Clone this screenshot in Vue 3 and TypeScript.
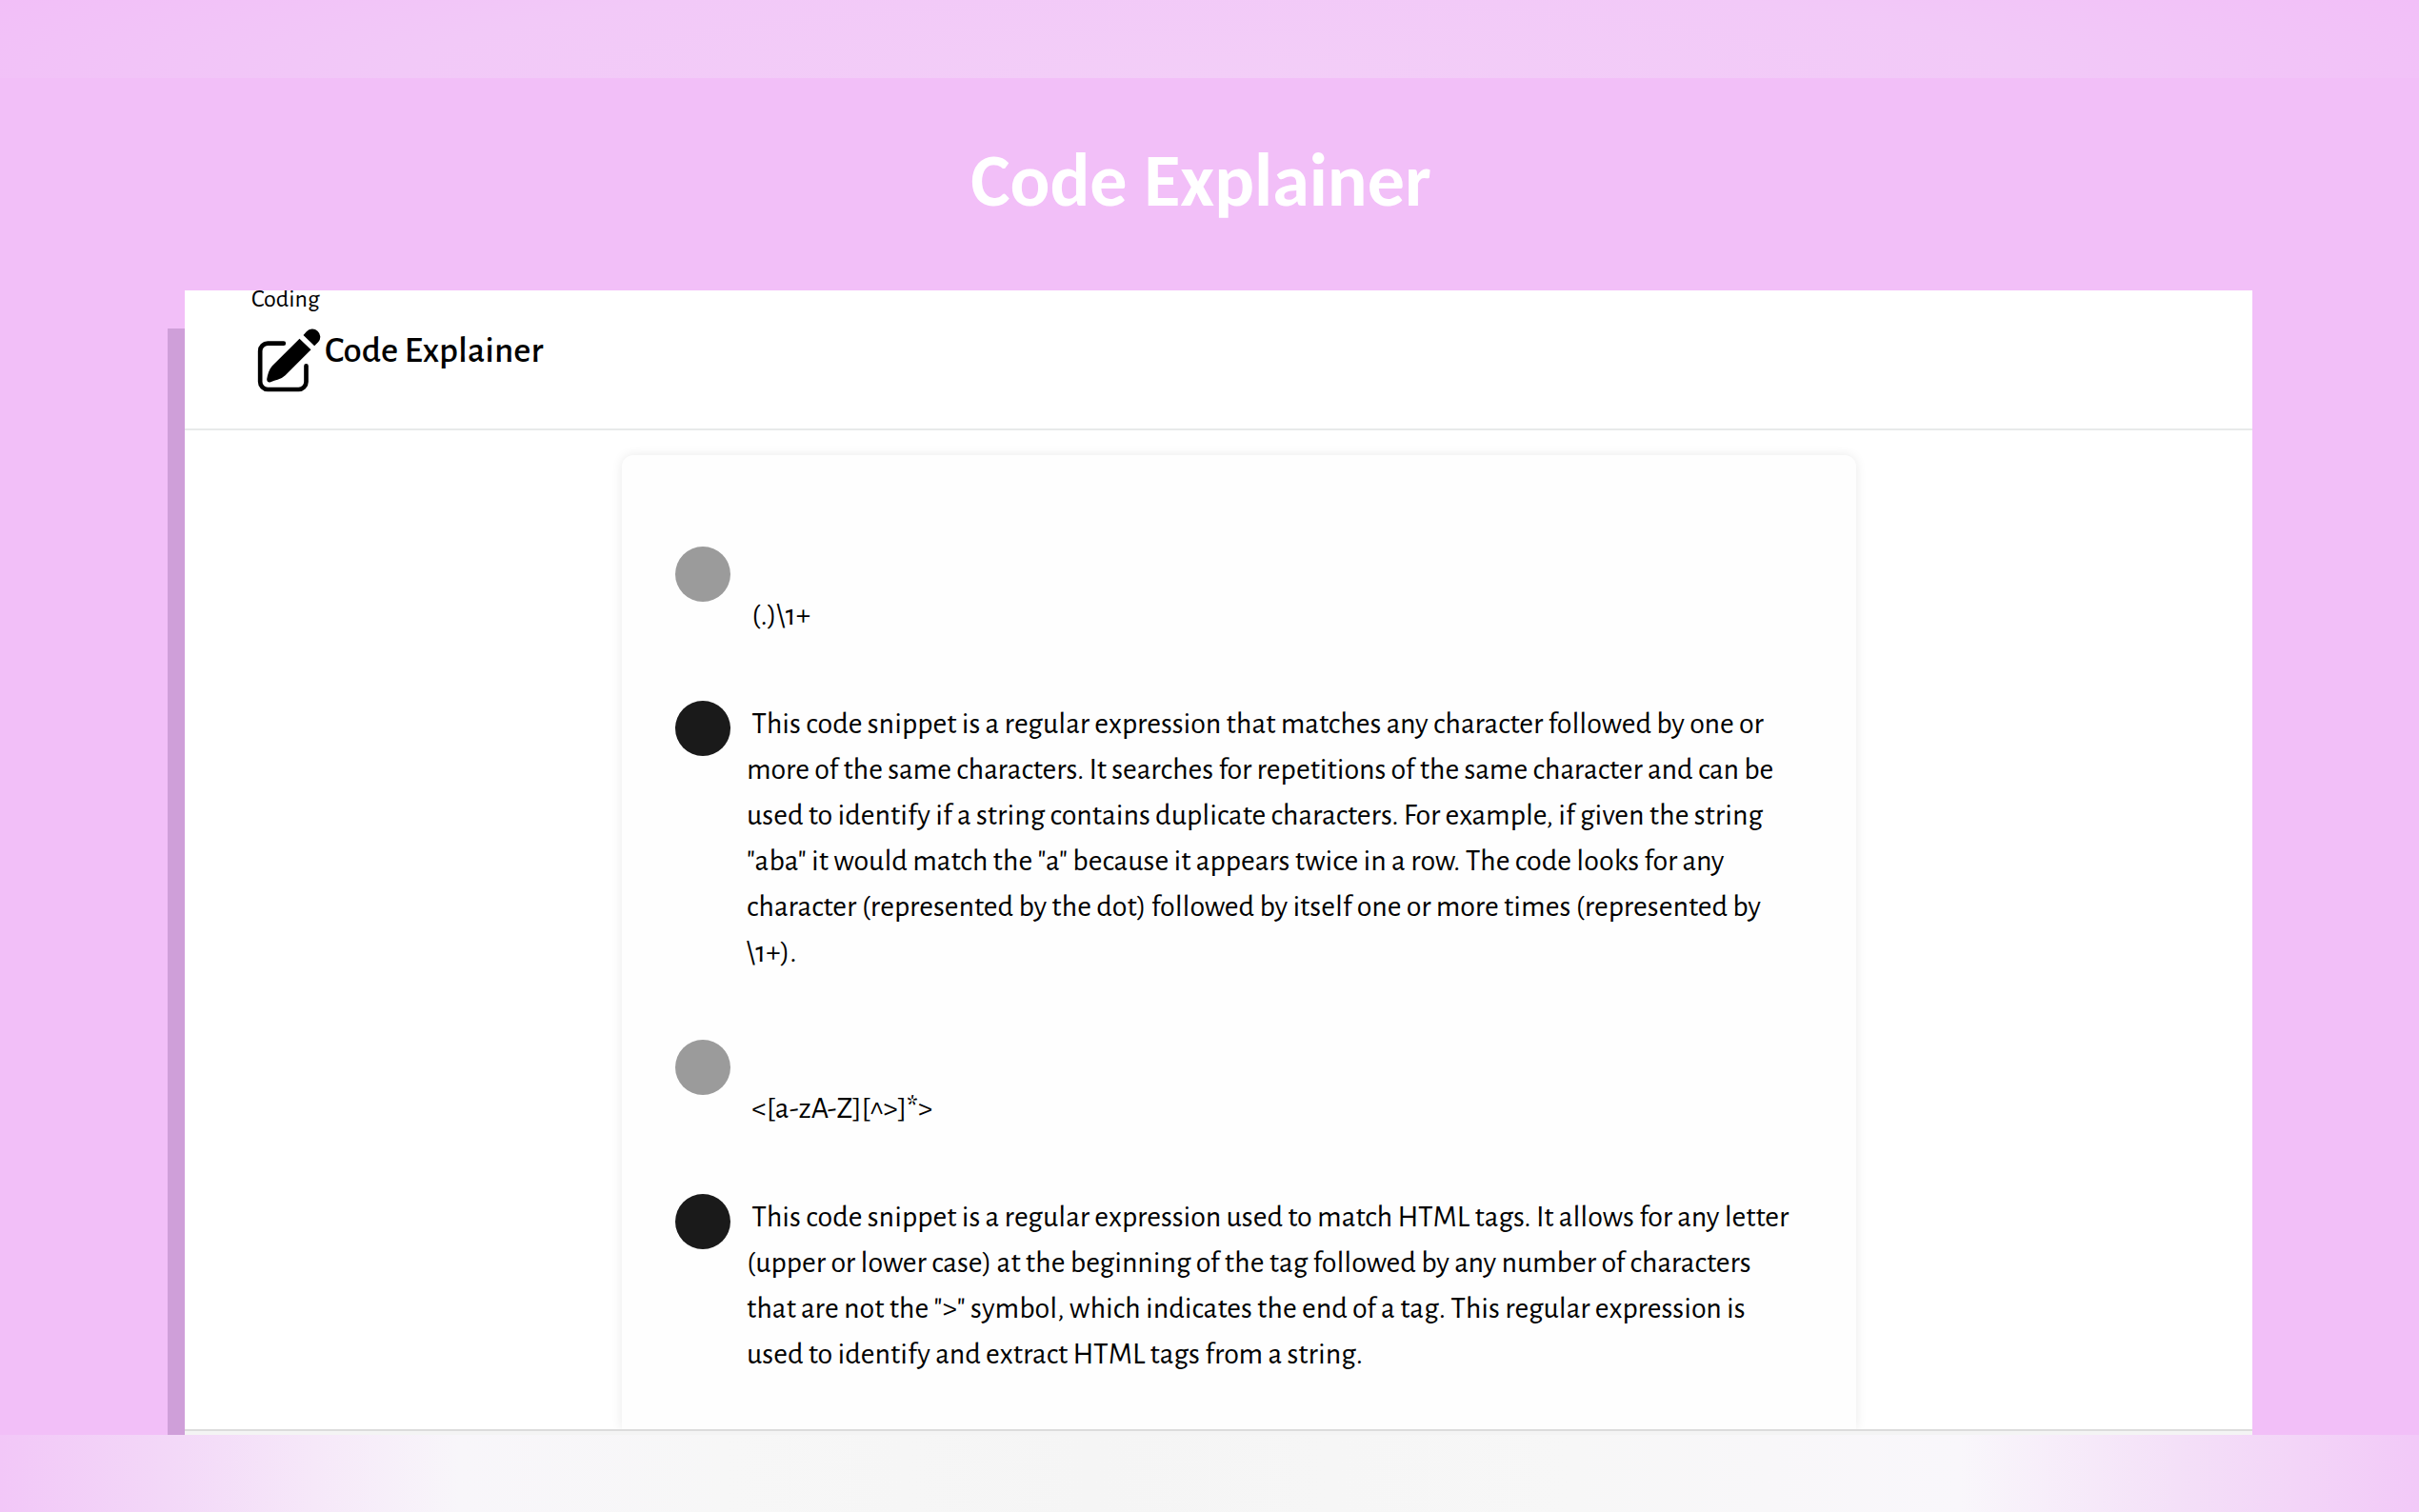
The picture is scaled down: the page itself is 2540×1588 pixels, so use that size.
<script setup lang="ts">
interface Message {
  role: 'user' | 'assistant'
  lines: string[]
}

const exchanges: Message[][] = [
  [
    { role: 'user', lines: ['', ' (.)\\1+'] },
    {
      role: 'assistant',
      lines: [
        ' This code snippet is a regular expression that matches any character followed by one or',
        'more of the same characters. It searches for repetitions of the same character and can be',
        'used to identify if a string contains duplicate characters. For example, if given the string',
        '"aba" it would match the "a" because it appears twice in a row. The code looks for any',
        'character (represented by the dot) followed by itself one or more times (represented by',
        '\\1+).'
      ]
    }
  ],
  [
    { role: 'user', lines: ['', ' <[a-zA-Z][^>]*>'] },
    {
      role: 'assistant',
      lines: [
        ' This code snippet is a regular expression used to match HTML tags. It allows for any letter',
        '(upper or lower case) at the beginning of the tag followed by any number of characters',
        'that are not the ">" symbol, which indicates the end of a tag. This regular expression is',
        'used to identify and extract HTML tags from a string.'
      ]
    }
  ]
]
</script>

<template>
  <main class="page">
    <div class="band"></div>
    <h1 class="title">Code Explainer</h1>

    <div class="stage">
      <div class="rail"></div>
      <section class="panel">
        <header class="head">
          <p class="category">Coding</p>
          <div class="tool">
            <svg class="icon" viewBox="333 193 200 201" aria-hidden="true">
              <path
                d="M416 240H366a24 24 0 0 0-24 24V361a24 24 0 0 0 24 24H463a24 24 0 0 0 24-24V311"
                fill="none"
                stroke="#000"
                stroke-width="14"
                stroke-linecap="round"
              />
              <path d="M466 225L502 260L421 341Q411 351 397 354Q387 356 375 362Q364 365 363 353C366 337 369 324 380 311Z" />
              <path d="M478 214L488 203A24 24 0 1 1 525 236L513 248Z" />
            </svg>
            <h2 class="name">Code Explainer</h2>
          </div>
        </header>

        <div class="card">
          <div v-for="(exchange, i) in exchanges" :key="i" class="exchange">
            <article v-for="message in exchange" :key="message.role" class="message">
              <span class="avatar" :class="message.role"></span>
              <p class="text">{{ message.lines.join('\n') }}</p>
            </article>
          </div>
        </div>
        <div class="bar"></div>
      </section>
    </div>

    <div class="floor"></div>
  </main>
</template>

<style>
body {
  margin: 0;
}
</style>

<style scoped>
.page {
  display: flex;
  flex-direction: column;
  min-height: 100vh;
  background: #f2bff8;
  color: #000;
  font-family: "Alegreya Sans", Lato, sans-serif;
}

.band {
  height: 82px;
  background: radial-gradient(ellipse 56% 220% at 50% 100%, #f3cef8 0%, #f2c9f8 60%, #f2bff8 100%);
}

.title {
  margin: 61px 18px 68px 0;
  color: #fff;
  font: bold 78px/94px Carlito, Lato, sans-serif;
  text-align: center;
}

.stage {
  display: flex;
  padding: 0 175px 0 176px;
}

.rail {
  flex: none;
  width: 18px;
  margin-top: 40px;
  background: #cf9fd9;
}

.panel {
  flex: 1;
  min-width: 0;
  overflow: hidden;
  background: #fff;
}

.head {
  padding: 0 70px 38px;
  border-bottom: 2px solid #e8eaea;
}

.category {
  margin: -7px 0 13px;
  font-size: 26px;
  line-height: 32px;
}

.tool {
  display: flex;
  align-items: flex-start;
  gap: 4px;
}

.icon {
  flex: none;
  width: 67px;
  height: 67px;
  margin: 2px 0 0 6px;
}

.name {
  margin: 0;
  font-size: 39px;
  font-weight: 500;
  line-height: 52px;
}

.card {
  display: flex;
  flex-direction: column;
  gap: 68px;
  margin: 26px 416px 0 459px;
  padding: 96px 56px 55px;
  border-radius: 12px 12px 0 0;
  background: #fefefe;
  box-shadow: 0 0 12px rgba(0, 0, 0, 0.09);
}

.exchange {
  display: flex;
  flex-direction: column;
  gap: 66px;
}

.message {
  display: flex;
  align-items: flex-start;
  gap: 17px;
}

.avatar {
  flex: none;
  width: 58px;
  height: 58px;
  border-radius: 50%;
}

.user {
  background: #9b9b9b;
}

.assistant {
  background: #1a1a1a;
}

.text {
  margin: 0;
  font-size: 32px;
  line-height: 48px;
  white-space: pre;
}

.bar {
  height: 4px;
  border-top: 2px solid #dcdcdc;
  background: #f4f4f4;
}

.floor {
  flex: 1;
  min-height: 82px;
  background: linear-gradient(
    90deg,
    #f2c7f8 0%,
    #f3d8f8 7%,
    #f6e8f9 13%,
    #f8f6fa 19%,
    #f7f7f7 30%,
    #f5f5f5 45%,
    #f7f7f7 65%,
    #f9f7fb 81%,
    #f4e0f8 90%,
    #f2c9f8 100%
  );
}
</style>
